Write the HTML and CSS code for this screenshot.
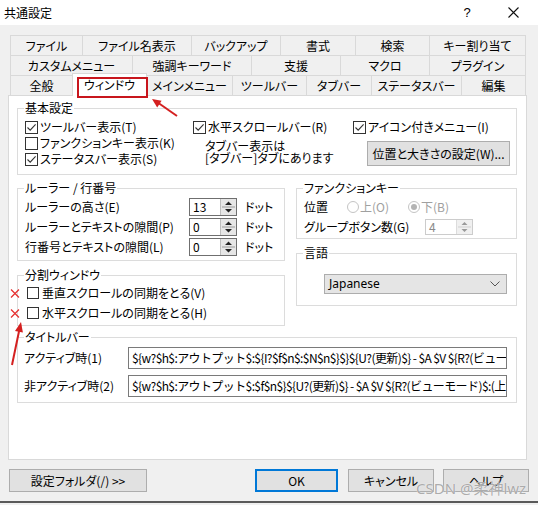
FILE: index.html
```html
<!DOCTYPE html>
<html lang="ja">
<head>
<meta charset="utf-8">
<title>共通設定</title>
<link rel="stylesheet" href="styles.css">
</head>
<body>
<div class="titlebar">
  <span class="title">共通設定</span>
  <span class="tb-btn tb-help">?</span>
  <span class="tb-btn tb-close"><svg width="11" height="11" viewBox="0 0 11 11"><path d="M0.5 0.5 L10.5 10.5 M10.5 0.5 L0.5 10.5" stroke="#111" stroke-width="1.1" fill="none"/></svg></span>
</div>

<div class="tabs">
  <div class="tabrow r1">
    <div class="tab">ファイル</div>
    <div class="tab">ファイル名表示</div>
    <div class="tab">バックアップ</div>
    <div class="tab">書式</div>
    <div class="tab">検索</div>
    <div class="tab">キー割り当て</div>
  </div>
  <div class="tabrow r2">
    <div class="tab">カスタムメニュー</div>
    <div class="tab">強調キーワード</div>
    <div class="tab">支援</div>
    <div class="tab">マクロ</div>
    <div class="tab">プラグイン</div>
  </div>
  <div class="tabrow r3">
    <div class="tab">全般</div>
    <div class="tab sel">ウィンドウ<span class="hl"></span></div>
    <div class="tab">メインメニュー</div>
    <div class="tab">ツールバー</div>
    <div class="tab">タブバー</div>
    <div class="tab">ステータスバー</div>
    <div class="tab">編集</div>
  </div>
</div>

<div class="panel">
  <fieldset class="g-basic">
    <legend>基本設定</legend>
    <div class="basic-grid">
      <label class="chk"><span class="cb"><svg width="11" height="11" viewBox="0 0 11 11"><path d="M1.5 5.5 L4.2 8.2 L9.6 2.4" stroke="#333" stroke-width="1.1" fill="none"/></svg></span>ツールバー表示(T)</label>
      <label class="chk"><span class="cb"><svg width="11" height="11" viewBox="0 0 11 11"><path d="M1.5 5.5 L4.2 8.2 L9.6 2.4" stroke="#333" stroke-width="1.1" fill="none"/></svg></span>水平スクロールバー(R)</label>
      <label class="chk"><span class="cb"><svg width="11" height="11" viewBox="0 0 11 11"><path d="M1.5 5.5 L4.2 8.2 L9.6 2.4" stroke="#333" stroke-width="1.1" fill="none"/></svg></span>アイコン付きメニュー(I)</label>
      <label class="chk"><span class="cb"></span>ファンクションキー表示(K)</label>
      <div class="tabnote">タブバー表示は<br>[タブバー]タブにあります</div>
      <div class="posbtn-wrap"><span class="btn posbtn">位置と大きさの設定(W)...</span></div>
      <label class="chk"><span class="cb"><svg width="11" height="11" viewBox="0 0 11 11"><path d="M1.5 5.5 L4.2 8.2 L9.6 2.4" stroke="#333" stroke-width="1.1" fill="none"/></svg></span>ステータスバー表示(S)</label>
    </div>
  </fieldset>

  <div class="mid">
    <div class="col">
      <fieldset class="g-ruler">
        <legend>ルーラー / 行番号</legend>
        <div class="ruler-body">
          <div class="srow"><span class="slabel">ルーラーの高さ(E)</span><span class="spin"><span class="spin-val">13</span><span class="spin-btns"><svg width="15" height="16" viewBox="0 0 15 16"><path d="M4 6 L7.5 2.5 L11 6 Z M4 10 L11 10 L7.5 13.5 Z" fill="#222"/><path d="M1 8 H14" stroke="#9a9a9a" stroke-width="1"/></svg></span></span><span class="unit">ドット</span></div>
          <div class="srow"><span class="slabel">ルーラーとテキストの隙間(P)</span><span class="spin"><span class="spin-val">0</span><span class="spin-btns"><svg width="15" height="16" viewBox="0 0 15 16"><path d="M4 6 L7.5 2.5 L11 6 Z M4 10 L11 10 L7.5 13.5 Z" fill="#222"/><path d="M1 8 H14" stroke="#9a9a9a" stroke-width="1"/></svg></span></span><span class="unit">ドット</span></div>
          <div class="srow"><span class="slabel">行番号とテキストの隙間(L)</span><span class="spin"><span class="spin-val">0</span><span class="spin-btns"><svg width="15" height="16" viewBox="0 0 15 16"><path d="M4 6 L7.5 2.5 L11 6 Z M4 10 L11 10 L7.5 13.5 Z" fill="#222"/><path d="M1 8 H14" stroke="#9a9a9a" stroke-width="1"/></svg></span></span><span class="unit">ドット</span></div>
        </div>
      </fieldset>
      <fieldset class="g-split">
        <legend>分割ウィンドウ</legend>
        <div class="split-body">
          <label class="chk"><span class="cb"></span>垂直スクロールの同期をとる(V)</label>
          <label class="chk"><span class="cb"></span>水平スクロールの同期をとる(H)</label>
        </div>
      </fieldset>
    </div>
    <div class="col">
      <fieldset class="g-fk">
        <legend>ファンクションキー</legend>
        <div class="fk-body">
          <div class="srow">
            <span class="fk-label">位置</span>
            <span class="radio"><span class="rc"></span>上(O)</span>
            <span class="radio"><span class="rc on"></span>下(B)</span>
          </div>
          <div class="srow">
            <span class="grp-label">グループボタン数(G)</span>
            <span class="spin dis"><span class="spin-val">4</span><span class="spin-btns"><svg width="15" height="14" viewBox="0 0 15 14"><path d="M4.5 5 L7.5 2 L10.5 5 Z M4.5 9 L10.5 9 L7.5 12 Z" fill="#9a9a9a"/><path d="M1 7 H14" stroke="#cfcfcf" stroke-width="1"/></svg></span></span>
          </div>
        </div>
      </fieldset>
      <fieldset class="g-lang">
        <legend>言語</legend>
        <div class="lang-body">
          <div class="select"><span>Japanese</span><svg width="10" height="6" viewBox="0 0 10 6"><path d="M0.5 0.5 L5 5 L9.5 0.5" stroke="#555" stroke-width="1" fill="none"/></svg></div>
        </div>
      </fieldset>
    </div>
  </div>

  <fieldset class="g-title">
    <legend>タイトルバー</legend>
    <div class="title-body">
      <div class="trow"><span class="tlabel">アクティブ時(1)</span><span class="tinput">${w?$h$:アウトプット$:${I?$f$n$:$N$n$}$}${U?(更新)$} - $A $V ${R?(ビューモード)$:(上書き)$}</span></div>
      <div class="trow"><span class="tlabel">非アクティブ時(2)</span><span class="tinput">${w?$h$:アウトプット$:$f$n$}${U?(更新)$} - $A $V ${R?(ビューモード)$:(上書き)$}</span></div>
    </div>
  </fieldset>
</div>

<div class="bottombar">
  <span class="btn b-folder">設定フォルダ(/) &gt;&gt;</span>
  <span class="btn b-ok">OK</span>
  <span class="btn b-cancel">キャンセル</span>
  <span class="btn b-help">ヘルプ</span>
</div>
<div class="footer-line"></div>

<div class="watermark">CSDN @柔神lwz</div>

<svg class="annot" width="538" height="505" viewBox="0 0 538 505">
  <path d="M177 116 L157 102" stroke="#d42020" stroke-width="2" fill="none"/>
  <polygon points="152,99 161.6,100.8 157.2,107.4" fill="#d42020"/>
  <path d="M12 365 L19.5 329" stroke="#d42020" stroke-width="2" fill="none"/>
  <polygon points="21,322 22.9,332.6 15,331" fill="#d42020"/>
  <path d="M11 289.5 L19 297.5 M19 289.5 L11 297.5" stroke="#e63232" stroke-width="1.3" fill="none"/>
  <path d="M11 309.5 L19 317.5 M19 309.5 L11 317.5" stroke="#e63232" stroke-width="1.3" fill="none"/>
</svg>
</body>
</html>
```

FILE: styles.css
```css
* { box-sizing: border-box; }
html, body { margin: 0; padding: 0; }
body {
  width: 538px;
  height: 505px;
  background: #f0f0f0;
  font-family: "Noto Sans CJK JP", "Noto Sans", sans-serif;
  font-size: 12px;
  line-height: 16px;
  color: #000;
  position: relative;
  overflow: hidden;
  font-feature-settings: "palt";
}

/* title bar */
.titlebar {
  height: 25px;
  background: #fff;
  display: flex;
  align-items: center;
  padding-left: 4px;
  padding-right: 2px;
}
.title { flex: 1; font-feature-settings: normal; }
.tb-btn {
  width: 46px;
  height: 25px;
  display: flex;
  align-items: center;
  justify-content: center;
}
.tb-help { font-size: 13px; font-family: "Liberation Sans", sans-serif; }

/* tabs */
.tabs {
  margin: 10px 0 0 10px;
  width: 516px;
}
.tabrow { display: grid; height: 20px; }
.r1 { grid-template-columns: 73px 109px 89px 75px 74px 96px; }
.r2 { grid-template-columns: 123px 119px 89px 89px 96px; }
.r3 { grid-template-columns: 63px 74px 86px 74px 65px 90px 64px; }
.tab {
  height: 20px;
  border-top: 1px solid #d9d9d9;
  border-right: 1px solid #d9d9d9;
  background: #f0f0f0;
  display: flex;
  align-items: center;
  justify-content: center;
  white-space: nowrap;
}
.tab:first-child { border-left: 1px solid #d9d9d9; }
.tab.sel {
  background: #fff;
  margin-top: -2px;
  height: 23px;
  position: relative;
  z-index: 1;
  border-left: 1px solid #d9d9d9;
  margin-left: -1px;
  align-items: flex-start;
  padding-top: 3px;
}
.hl {
  position: absolute;
  left: 4px;
  top: 3px;
  width: 71px;
  height: 21px;
  border: 2px solid #c8161d;
}

/* panel */
.panel {
  margin-left: 8px;
  width: 519px;
  height: 365px;
  background: #fff;
  border: 1px solid #d9d9d9;
  padding: 5px 9px 0 8px;
}
fieldset {
  margin: 0;
  padding: 0;
  border: 1px solid #dcdcdc;
  min-width: 0;
}
legend {
  margin-left: 6px;
  padding: 0 1px;
  line-height: 14px;
}

.g-basic { height: 74px; }
.basic-grid {
  display: grid;
  grid-template-columns: 168px 160px 1fr;
  grid-template-rows: 16px 16px 16px;
  padding: 4px 0 0 7px;
}
.chk {
  display: flex;
  align-items: center;
  gap: 2px;
  white-space: nowrap;
}
.cb {
  width: 13px;
  height: 13px;
  border: 1px solid #333;
  background: #fff;
  display: inline-flex;
  align-items: center;
  justify-content: center;
  flex: none;
}
.tabnote {
  grid-column: 2;
  grid-row: 2 / 4;
  padding: 5px 0 0 12px;
  line-height: 12px;
  white-space: nowrap;
}
.posbtn-wrap {
  grid-column: 3;
  grid-row: 2 / 4;
  padding: 6px 0 0 14px;
}
.btn {
  display: flex;
  align-items: center;
  justify-content: center;
  background: #e1e1e1;
  border: 1px solid #adadad;
  white-space: nowrap;
}
.posbtn { width: 143px; height: 25px; }

/* middle */
.mid {
  display: grid;
  grid-template-columns: 268px 221px;
  column-gap: 11px;
  margin-top: 6px;
}
.col {
  display: flex;
  flex-direction: column;
  gap: 7px;
}
.g-ruler { height: 80px; }
.g-split { height: 58px; }
.g-fk { height: 58px; }
.g-lang { height: 60px; }

.ruler-body { padding: 2px 0 0 7px; }
.srow {
  display: flex;
  align-items: center;
  height: 20px;
  white-space: nowrap;
}
.slabel { width: 164px; }
.unit { margin-left: 8px; }

.spin {
  display: flex;
  width: 48px;
  height: 18px;
  border: 1px solid #6f6f6f;
  background: #fff;
}
.spin-val { flex: 1; padding-left: 3px; line-height: 16px; }
.spin-btns {
  width: 16px;
  background: #e6e6e6;
  border-left: 1px solid #bdbdbd;
  display: flex;
  align-items: center;
  justify-content: center;
}
.spin.dis {
  height: 16px;
  border-color: #cccccc;
  color: #8a8a8a;
}
.spin.dis .spin-val { line-height: 14px; }
.spin.dis .spin-btns { background: #f0f0f0; border-left-color: #dcdcdc; }

.split-body { padding: 1px 0 0 9px; }
.split-body .chk { height: 20px; gap: 3px; }
.split-body .cb { width: 12px; height: 12px; }

.fk-body { padding: 2px 0 0 7px; }
.fk-label { width: 43px; }
.grp-label { width: 121px; }
.radio {
  display: flex;
  align-items: center;
  gap: 1px;
  width: 61px;
  color: #a0a0a0;
}
.rc {
  width: 12px;
  height: 12px;
  border: 1px solid #c4c4c4;
  border-radius: 50%;
  background: #fff;
  display: inline-flex;
  align-items: center;
  justify-content: center;
}
.rc.on::after {
  content: "";
  width: 6px;
  height: 6px;
  border-radius: 50%;
  background: #b4b4b4;
}

.lang-body { padding: 14px 0 0 27px; }
.select {
  width: 183px;
  height: 20px;
  background: #e5e5e5;
  border: 1px solid #adadad;
  display: flex;
  align-items: center;
  justify-content: space-between;
  padding: 0 6px 0 4px;
  font-family: "Noto Sans", sans-serif;
}

.g-title { height: 73px; margin-top: 4px; }
.title-body {
  padding: 3px 0 0 6px;
  display: flex;
  flex-direction: column;
  gap: 6px;
}
.trow { display: flex; align-items: center; height: 22px; }
.tlabel { width: 104px; white-space: nowrap; }
.tinput {
  width: 379px;
  height: 22px;
  border: 1px solid #7a7a7a;
  padding: 0 3px;
  line-height: 20px;
  overflow: hidden;
  white-space: nowrap;
  letter-spacing: -0.6px;
  font-feature-settings: normal;
}

/* bottom */
.bottombar {
  display: flex;
  margin-top: 9px;
  height: 23px;
  padding-left: 9px;
}
.bottombar .btn { height: 23px; }
.b-folder { width: 138px; }
.b-ok { width: 83px; margin-left: 108px; border: 2px solid #0078d7; }
.b-cancel { width: 86px; margin-left: 10px; }
.b-help { width: 86px; margin-left: 9px; }
.footer-line {
  margin-top: 9px;
  border-top: 2px solid #5a5a5a;
}

.watermark {
  position: absolute;
  left: 416px;
  top: 479px;
  font-family: "Noto Sans", "Noto Sans CJK SC", sans-serif;
  font-size: 15px;
  line-height: 18px;
  color: rgba(150, 150, 150, 0.8);
  text-shadow: 0 0 1px #fff;
  white-space: nowrap;
  font-feature-settings: normal;
}
.annot {
  position: absolute;
  left: 0;
  top: 0;
  pointer-events: none;
}
```
